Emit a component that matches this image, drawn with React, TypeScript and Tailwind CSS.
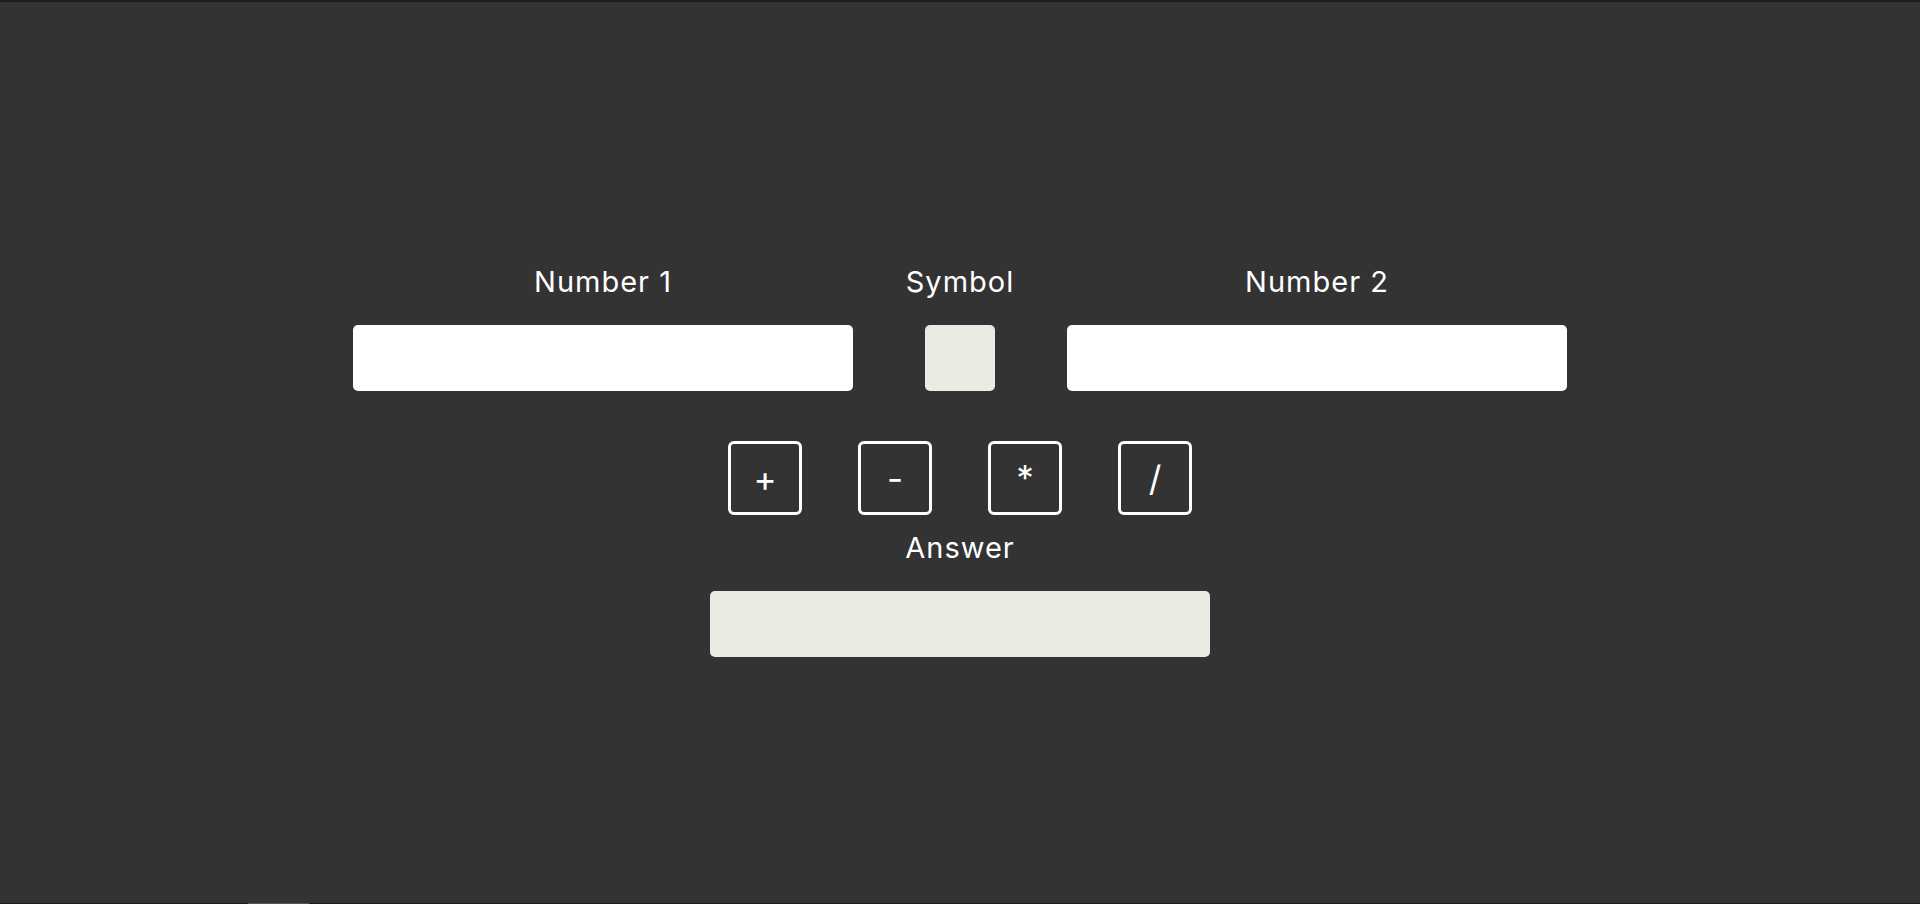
import { useState } from 'react';

const font = { fontFamily: 'Inter, "Open Sans", sans-serif' };

export default function App() {
  const [num1, setNum1] = useState('');
  const [num2, setNum2] = useState('');
  const [symbol, setSymbol] = useState('');
  const [answer, setAnswer] = useState('');

  const calculate = (op: string) => {
    setSymbol(op);
    const a = parseFloat(num1);
    const b = parseFloat(num2);
    if (isNaN(a) || isNaN(b)) {
      setAnswer('');
      return;
    }
    let result = 0;
    if (op === '+') result = a + b;
    if (op === '-') result = a - b;
    if (op === '*') result = a * b;
    if (op === '/') result = a / b;
    setAnswer(String(result));
  };

  const ops = ['+', '-', '*', '/'];

  return (
    <div className="h-[904px] w-full bg-[#333333] flex flex-col overflow-hidden" style={font}>
      <div className="h-[2px] bg-[#1c1c1c]" />

      <div className="flex-1 flex flex-col items-center pt-[263px] text-white">
        {/* inputs row */}
        <div className="flex gap-[72px]">
          <div className="flex flex-col items-center w-[500px]">
            <label className="text-[29px] leading-[34px] tracking-[1px] whitespace-nowrap">Number 1</label>
            <input
              type="text"
              value={num1}
              onChange={(e) => setNum1(e.target.value)}
              className="mt-[26px] w-[500px] h-[66px] bg-white rounded-[5px] text-black text-2xl px-4 outline-none"
            />
          </div>

          <div className="flex flex-col items-center w-[70px]">
            <label className="text-[29px] leading-[34px] tracking-[1px] whitespace-nowrap">Symbol</label>
            <input
              type="text"
              value={symbol}
              readOnly
              className="mt-[26px] w-[70px] h-[66px] bg-[#ebebe4] rounded-[5px] text-black text-2xl text-center outline-none"
            />
          </div>

          <div className="flex flex-col items-center w-[500px]">
            <label className="text-[29px] leading-[34px] tracking-[1px] whitespace-nowrap">Number 2</label>
            <input
              type="text"
              value={num2}
              onChange={(e) => setNum2(e.target.value)}
              className="mt-[26px] w-[500px] h-[66px] bg-white rounded-[5px] text-black text-2xl px-4 outline-none"
            />
          </div>
        </div>

        {/* operators */}
        <div className="mt-[50px] flex gap-[56px]">
          {ops.map((op) => (
            <button
              key={op}
              onClick={() => calculate(op)}
              className="w-[74px] h-[74px] border-[3px] border-white rounded-[6px] flex items-center justify-center text-[35px] leading-none text-white"
            >
              {op}
            </button>
          ))}
        </div>

        <label className="mt-[16px] text-[29px] leading-[34px] tracking-[1px]">Answer</label>
        <input
          type="text"
          value={answer}
          readOnly
          className="mt-[26px] w-[500px] h-[66px] bg-[#ebebe4] rounded-[5px] text-black text-2xl px-4 outline-none"
        />
      </div>

      <div className="h-[1px] bg-[#1c1c1c] flex">
        <div className="ml-[248px] w-[61px] bg-[#555555]" />
      </div>
    </div>
  );
}
